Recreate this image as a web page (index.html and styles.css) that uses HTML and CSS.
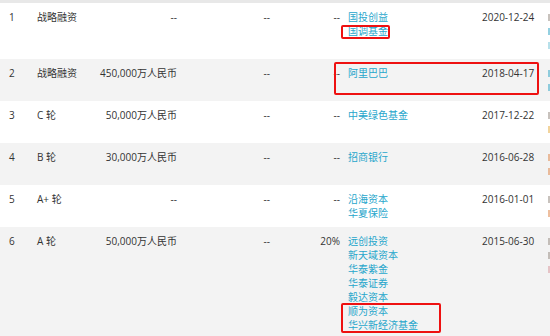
FILE: index.html
```html
<!DOCTYPE html>
<html lang="zh">
<head>
<meta charset="utf-8">
<link rel="stylesheet" href="styles.css">
</head>
<body>
<div class="wrap">
  <div class="topbar"></div>
  <table class="grid">
    <colgroup>
      <col class="c-no"><col class="c-round"><col class="c-amt"><col class="c-val"><col class="c-ratio"><col class="c-inv"><col class="c-date"><col class="c-more">
    </colgroup>
    <tbody>
      <tr>
        <td class="no">1</td><td>战略融资</td><td class="r">--</td><td class="r">--</td><td class="r">--</td>
        <td class="inv"><a>国投创益</a><a>国调基金</a></td><td>2020-12-24</td>
        <td class="more"><i class="m1"></i><i class="m2"></i><i class="m3"></i></td>
      </tr>
      <tr class="alt">
        <td class="no">2</td><td>战略融资</td><td class="r">450,000万人民币</td><td class="r">--</td><td class="r">--</td>
        <td class="inv"><a>阿里巴巴</a></td><td>2018-04-17</td>
        <td class="more"><i class="m2"></i><i class="m2"></i></td>
      </tr>
      <tr>
        <td class="no">3</td><td>C 轮</td><td class="r">50,000万人民币</td><td class="r">--</td><td class="r">--</td>
        <td class="inv"><a>中美绿色基金</a></td><td>2017-12-22</td>
        <td class="more"><i class="m1"></i><i class="m4"></i></td>
      </tr>
      <tr class="alt">
        <td class="no">4</td><td>B 轮</td><td class="r">30,000万人民币</td><td class="r">--</td><td class="r">--</td>
        <td class="inv"><a>招商银行</a></td><td>2016-06-28</td>
        <td class="more"><i class="m5"></i><i class="m5"></i></td>
      </tr>
      <tr>
        <td class="no">5</td><td>A+ 轮</td><td class="r">--</td><td class="r">--</td><td class="r">--</td>
        <td class="inv"><a>沿海资本</a><a>华夏保险</a></td><td>2016-01-01</td>
        <td class="more"><i class="m1"></i><i class="m5"></i></td>
      </tr>
      <tr class="alt">
        <td class="no">6</td><td>A 轮</td><td class="r">50,000万人民币</td><td class="r">--</td><td class="r">20%</td>
        <td class="inv"><a>远创投资</a><a>新天域资本</a><a>华泰紫金</a><a>华泰证券</a><a>毅达资本</a><a>顺为资本</a><a>华兴新经济基金</a></td><td>2015-06-30</td>
        <td class="more"><i class="m1"></i><i class="m1"></i><i class="m6"></i></td>
      </tr>
    </tbody>
  </table>
  <div class="mark mark-a"></div>
  <div class="mark mark-b"></div>
  <div class="mark mark-c"></div>
</div>
</body>
</html>
```
FILE: styles.css
```css
html, body {
  margin: 0;
  padding: 0;
  background: #ffffff;
}
body {
  width: 550px;
  height: 336px;
  overflow: hidden;
  font-family: "Open Sans", "Noto Sans CJK SC", sans-serif;
  font-size: 10px;
  color: #333333;
}
.wrap {
  position: relative;
  width: 550px;
  height: 336px;
  overflow: hidden;
}
.topbar {
  height: 3px;
  background: #e8e8e8;
}
.grid {
  border-collapse: collapse;
  table-layout: fixed;
  width: 550px;
}
.c-no { width: 37px; }
.c-round { width: 63px; }
.c-amt { width: 77px; }
.c-val { width: 93px; }
.c-ratio { width: 70px; }
.c-inv { width: 142px; }
.c-date { width: 66px; }
.c-more { width: 2px; }
.grid td {
  padding: 7px 0;
  line-height: 14px;
  vertical-align: top;
  white-space: nowrap;
}
.grid tr.alt td {
  background: #f3f3f3;
}
.grid tr.alt:last-child td {
  padding-bottom: 20px;
}
.grid td.no {
  padding-left: 9px;
}
.grid td.r {
  text-align: right;
}
.grid td.inv {
  padding-left: 8px;
}
.inv a {
  display: block;
  color: #27a6cb;
}
.more i {
  display: block;
  height: 14px;
  position: relative;
}
.more i::before {
  content: "";
  position: absolute;
  left: 0;
  top: 4px;
  width: 2px;
  height: 7px;
  background: currentColor;
  opacity: 0.55;
}
.m1 { color: #9a8f86; }
.m2 { color: #3aaac8; }
.m3 { color: #7cc6d8; }
.m4 { color: #e8b04a; }
.m5 { color: #e08a50; }
.m6 { color: #d89aa0; }
.mark {
  position: absolute;
  border: 2px solid #ee1111;
  border-radius: 2px;
  box-sizing: border-box;
}
.mark-a {
  left: 341px;
  top: 25px;
  width: 49px;
  height: 14px;
}
.mark-b {
  left: 334px;
  top: 62px;
  width: 205px;
  height: 33px;
}
.mark-c {
  left: 341px;
  top: 303px;
  width: 100px;
  height: 30px;
}
```
